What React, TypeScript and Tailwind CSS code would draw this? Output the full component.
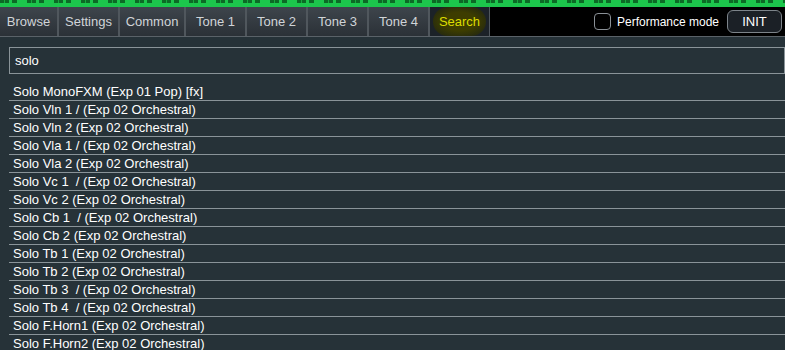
import React from 'react';

const tabs = ['Browse', 'Settings', 'Common', 'Tone 1', 'Tone 2', 'Tone 3', 'Tone 4'];
const tabWidths = ['w-[59px]', 'w-[61px]', 'w-[66px]', 'w-[61px]', 'w-[61px]', 'w-[61px]', 'w-[61px]'];

const results = [
  'Solo MonoFXM (Exp 01 Pop) [fx]',
  'Solo Vln 1 / (Exp 02 Orchestral)',
  'Solo Vln 2 (Exp 02 Orchestral)',
  'Solo Vla 1 / (Exp 02 Orchestral)',
  'Solo Vla 2 (Exp 02 Orchestral)',
  'Solo Vc 1  / (Exp 02 Orchestral)',
  'Solo Vc 2 (Exp 02 Orchestral)',
  'Solo Cb 1  / (Exp 02 Orchestral)',
  'Solo Cb 2 (Exp 02 Orchestral)',
  'Solo Tb 1 (Exp 02 Orchestral)',
  'Solo Tb 2 (Exp 02 Orchestral)',
  'Solo Tb 3  / (Exp 02 Orchestral)',
  'Solo Tb 4  / (Exp 02 Orchestral)',
  'Solo F.Horn1 (Exp 02 Orchestral)',
  'Solo F.Horn2 (Exp 02 Orchestral)',
];

export default function App() {
  return (
    <div className="w-[785px] h-[350px] overflow-hidden bg-[#263238] font-['Liberation_Sans',sans-serif] text-[13px]">
      {/* level meter strip */}
      <div className="h-[7px] bg-[#1cc64c] flex flex-col">
        <div className="h-[3px] bg-[repeating-linear-gradient(90deg,#0c6a26_0_4px,#16a83e_4px_5px,#0c6a26_5px_9px,#1cc64c_9px_12px,#0c6a26_12px_17px,#1cc64c_17px_27px)]" />
      </div>

      {/* tab bar */}
      <div className="h-[30px] bg-black flex border-b border-[#5a6268]">
        {tabs.map((t, i) => (
          <div
            key={t}
            className={`${tabWidths[i]} h-full flex items-center justify-center border-r-2 border-[#50575d] bg-gradient-to-b from-[#3e454c] to-[#2b3137] text-[#d0d4d8] text-[13px]`}
          >
            {t}
          </div>
        ))}
        <div className="w-[60px] h-full flex items-center justify-center border-r border-[#50575d] bg-[#1c2228]">
          <span className="px-[6px] py-[5px] rounded-full bg-[radial-gradient(ellipse_at_center,#3d3d00_45%,#2a2d0c_75%,transparent_100%)] text-[#dcdc00]">
            Search
          </span>
        </div>
        <div className="flex-1" />
        <div className="flex items-center mr-[3px]">
          <div className="w-[17px] h-[17px] rounded-[4px] border border-[#8a9096] bg-black mr-[6px]" />
          <span className="text-white text-[12px] mr-[8px]">Performance mode</span>
          <div className="w-[55px] h-[23px] rounded-[6px] border border-[#7d848a] bg-[#1b2026] text-white flex items-center justify-center text-[13px]">
            INIT
          </div>
        </div>
      </div>

      {/* search panel */}
      <div className="pl-[9px] pt-[10px]">
        <div className="h-[27px] border border-[#8a9499] flex items-center pl-[5px] text-white">
          solo
        </div>
        <div className="mt-[9px] flex flex-col">
          {results.map((r) => (
            <div
              key={r}
              className="h-[18px] border-b border-[#8a9499] flex items-center pl-[4px] text-white whitespace-pre leading-none"
            >
              {r}
            </div>
          ))}
        </div>
      </div>
    </div>
  );
}
